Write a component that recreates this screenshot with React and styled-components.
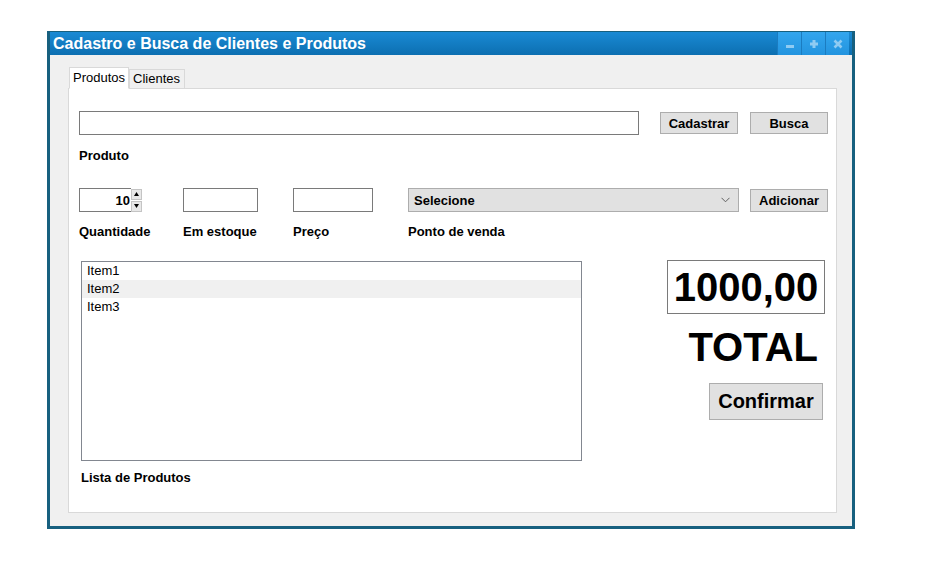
import React from "react";
import styled, { createGlobalStyle } from "styled-components";

const GlobalStyle = createGlobalStyle`
  body {
    margin: 0;
    background: #fff;
    font-family: "Liberation Sans", Arial, sans-serif;
    color: #000;
  }
`;

const Page = styled.div`
  width: 948px;
  height: 564px;
  padding: 31px 0 0 47px;
  box-sizing: border-box;
`;

const Window = styled.div`
  width: 808px;
  height: 498px;
  box-sizing: border-box;
  border: 3px solid #17607f;
  border-top-width: 1px;
  display: flex;
  flex-direction: column;
  background: #f0f0f0;
`;

const TitleBar = styled.div`
  height: 23px;
  display: flex;
  align-items: center;
  justify-content: space-between;
  background: linear-gradient(180deg, #1a8ad4 0%, #0c6fb1 100%);
  padding-left: 3px;
`;

const Title = styled.div`
  color: #fff;
  font-weight: bold;
  font-size: 16px;
  line-height: 20px;
`;

const WinButtons = styled.div`
  display: flex;
  height: 100%;
  margin-right: 3px;
`;

const WinButton = styled.div`
  width: 23px;
  height: 100%;
  background: linear-gradient(180deg, #33a6ee 0%, #2394df 100%);
  border-left: 1px solid #1b7cc0;
  display: flex;
  align-items: center;
  justify-content: center;
`;

const Body = styled.div`
  flex: 1;
  padding: 12px 15px 13px 18px;
  display: flex;
  flex-direction: column;
`;

const Tabs = styled.div`
  display: flex;
  align-items: flex-end;
  position: relative;
  z-index: 1;
  margin-bottom: -1px;
  padding-left: 1px;
`;

const Tab = styled.div`
  font-size: 13px;
  line-height: 16px;
  padding: ${(p) => (p.$active ? "2px 3px 2px 3px" : "1px 4px 1px 3px")};
  border: 1px solid #d9d9d9;
  border-bottom: ${(p) => (p.$active ? "1px solid #fff" : "1px solid #d9d9d9")};
  background: ${(p) => (p.$active ? "#fff" : "#f0f0f0")};
`;

const Panel = styled.div`
  flex: 1;
  background: #fff;
  border: 1px solid #d9d9d9;
  padding: 22px 8px 0 10px;
  display: flex;
  flex-direction: column;
`;

const Row = styled.div`
  display: flex;
  align-items: center;
`;

const TextInput = styled.div`
  width: ${(p) => p.$w}px;
  height: 24px;
  box-sizing: border-box;
  border: 1px solid #7a7a7a;
  background: #fff;
`;

const Button = styled.div`
  width: ${(p) => p.$w}px;
  height: ${(p) => p.$h || 22}px;
  box-sizing: border-box;
  margin-left: ${(p) => p.$ml || 0}px;
  background: #e1e1e1;
  border: 1px solid #adadad;
  display: flex;
  align-items: center;
  justify-content: center;
  font-weight: bold;
  font-size: ${(p) => p.$fs || 13}px;
`;

const ConfirmButton = styled(Button)`
  margin-top: 13px;
  margin-right: 5px;
`;

const Label = styled.div`
  font-weight: bold;
  font-size: 13px;
  line-height: 16px;
  margin-top: ${(p) => p.$mt || 0}px;
`;

const FieldGrid = styled.div`
  margin-top: 24px;
  display: grid;
  grid-template-columns: 104px 110px 115px 342px 78px;
  row-gap: 12px;
  align-items: center;
`;

const Spinner = styled.div`
  display: flex;
  align-items: center;
`;

const SpinInput = styled.div`
  width: 52px;
  height: 24px;
  box-sizing: border-box;
  border: 1px solid #7a7a7a;
  border-right: none;
  font-weight: bold;
  font-size: 13px;
  display: flex;
  align-items: center;
  justify-content: flex-end;
  padding-right: 1px;
`;

const SpinArrows = styled.div`
  display: flex;
  flex-direction: column;
  gap: 1px;
`;

const SpinArrow = styled.div`
  width: 11px;
  height: 11px;
  box-sizing: border-box;
  background: #e8e8e8;
  border: 1px solid #c4c4c4;
  display: flex;
  align-items: center;
  justify-content: center;
`;

const Select = styled.div`
  width: 331px;
  height: 24px;
  box-sizing: border-box;
  background: #e1e1e1;
  border: 1px solid #adadad;
  display: flex;
  align-items: center;
  justify-content: space-between;
  padding: 0 8px 0 5px;
  font-weight: bold;
  font-size: 13px;
`;

const Bottom = styled.div`
  margin-top: 21px;
  display: flex;
`;

const ListColumn = styled.div`
  margin-left: 2px;
  display: flex;
  flex-direction: column;
`;

const ListBox = styled.div`
  width: 501px;
  height: 200px;
  box-sizing: border-box;
  border: 1px solid #828790;
  background: #fff;
`;

const ListItem = styled.div`
  height: 18px;
  line-height: 18px;
  font-size: 13px;
  padding-left: 5px;
  background: ${(p) => (p.$hl ? "#f0f0f0" : "transparent")};
`;

const TotalColumn = styled.div`
  flex: 1;
  margin-top: -1px;
  display: flex;
  flex-direction: column;
  align-items: flex-end;
`;

const TotalBox = styled.div`
  width: 158px;
  height: 54px;
  box-sizing: border-box;
  border: 1px solid #7a7a7a;
  margin-right: 3px;
  display: flex;
  align-items: center;
  justify-content: center;
  font-weight: bold;
  font-size: 40px;
`;

const TotalLabel = styled.div`
  font-weight: bold;
  font-size: 40px;
  line-height: 46px;
  margin: 10px 10px 0 0;
`;

const Minus = () => (
  <svg width="10" height="10" viewBox="0 0 10 10">
    <rect x="1" y="6" width="8" height="3" fill="#8fcbf2" />
  </svg>
);

const Plus = () => (
  <svg width="10" height="10" viewBox="0 0 10 10">
    <rect x="1" y="3.5" width="8" height="3" fill="#8fcbf2" />
    <rect x="3.5" y="1" width="3" height="8" fill="#8fcbf2" />
  </svg>
);

const Close = () => (
  <svg width="10" height="10" viewBox="0 0 10 10">
    <path d="M1.5 1.5 L8.5 8.5 M8.5 1.5 L1.5 8.5" stroke="#8fcbf2" strokeWidth="2.6" />
  </svg>
);

const Chevron = () => (
  <svg width="9" height="6" viewBox="0 0 9 6">
    <path d="M0.5 0.8 L4.5 4.8 L8.5 0.8" fill="none" stroke="#606060" strokeWidth="1" />
  </svg>
);

const Triangle = ({ up }) => (
  <svg width="5" height="4" viewBox="0 0 5 4">
    <path d={up ? "M0 4 L2.5 0 L5 4 Z" : "M0 0 L2.5 4 L5 0 Z"} fill="#000" />
  </svg>
);

export default function App() {
  return (
    <Page>
      <GlobalStyle />
      <Window>
        <TitleBar>
          <Title>Cadastro e Busca de Clientes e Produtos</Title>
          <WinButtons>
            <WinButton><Minus /></WinButton>
            <WinButton><Plus /></WinButton>
            <WinButton><Close /></WinButton>
          </WinButtons>
        </TitleBar>
        <Body>
          <Tabs>
            <Tab $active>Produtos</Tab>
            <Tab>Clientes</Tab>
          </Tabs>
          <Panel>
            <Row>
              <TextInput $w={560} />
              <Button $w={78} $ml={21}>Cadastrar</Button>
              <Button $w={78} $ml={12}>Busca</Button>
            </Row>
            <Label $mt={13}>Produto</Label>

            <FieldGrid>
              <Spinner>
                <SpinInput>10</SpinInput>
                <SpinArrows>
                  <SpinArrow><Triangle up /></SpinArrow>
                  <SpinArrow><Triangle /></SpinArrow>
                </SpinArrows>
              </Spinner>
              <TextInput $w={75} />
              <TextInput $w={80} />
              <Select>
                <span>Selecione</span>
                <Chevron />
              </Select>
              <Button $w={78} $h={23}>Adicionar</Button>
              <Label>Quantidade</Label>
              <Label>Em estoque</Label>
              <Label>Preço</Label>
              <Label>Ponto de venda</Label>
              <div />
            </FieldGrid>

            <Bottom>
              <ListColumn>
                <ListBox>
                  <ListItem>Item1</ListItem>
                  <ListItem $hl>Item2</ListItem>
                  <ListItem>Item3</ListItem>
                </ListBox>
                <Label $mt={9}>Lista de Produtos</Label>
              </ListColumn>
              <TotalColumn>
                <TotalBox>1000,00</TotalBox>
                <TotalLabel>TOTAL</TotalLabel>
                <ConfirmButton $w={114} $h={37} $fs={20}>Confirmar</ConfirmButton>
              </TotalColumn>
            </Bottom>
          </Panel>
        </Body>
      </Window>
    </Page>
  );
}
